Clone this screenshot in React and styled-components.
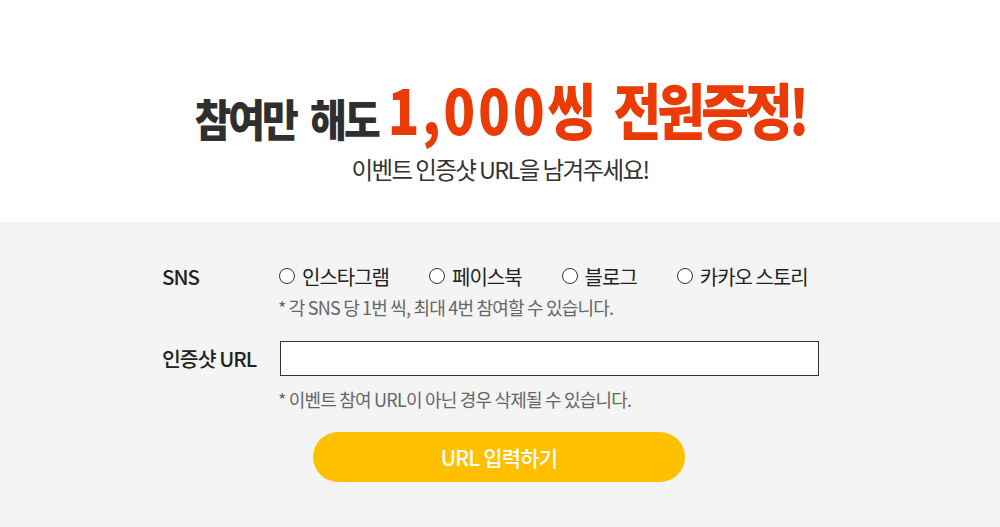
import React from "react";
import styled, { createGlobalStyle } from "styled-components";

const Global = createGlobalStyle`
  html, body { margin: 0; padding: 0; background: #fff; }
  body { font-family: "Noto Sans CJK KR", "Noto Sans", sans-serif; color: #333; }
  * { box-sizing: border-box; }
`;

const Page = styled.div`
  width: 1000px;
  height: 527px;
  display: flex;
  flex-direction: column;
  overflow: hidden;
`;

const Hero = styled.header`
  height: 222px;
  background: #fff;
  display: flex;
  flex-direction: column;
  align-items: center;
  padding-top: 70px;
`;

const Title = styled.h1`
  margin: 0;
  display: flex;
  align-items: flex-end;
  font-weight: 900;
  line-height: 1;
  height: 70px;
`;

const Part = styled.span`
  display: inline-block;
  color: ${(p) => (p.$red ? "#ea3a05" : "#2f2f2f")};
  font-size: ${(p) => p.$size}px;
  letter-spacing: ${(p) => p.$ls}px;
  word-spacing: 8px;
  margin-right: ${(p) => p.$mr || 0}px;
  transform: scaleY(${(p) => p.$sy});
  transform-origin: center bottom;
`;

const Sub = styled.p`
  margin: 15px 0 0;
  font-size: 23.5px;
  letter-spacing: -1.6px;
  color: #333;
  line-height: 1.2;
`;

const FormArea = styled.section`
  flex: 1;
  background: #f4f4f4;
  padding: 42px 0 0 162px;
  display: flex;
  flex-direction: column;
`;

const Row = styled.div`
  display: flex;
  align-items: center;
  height: ${(p) => p.$h}px;
  margin-top: ${(p) => p.$mt || 0}px;
`;

const Label = styled.div`
  width: ${(p) => p.$w || 118}px;
  font-size: 20.5px;
  font-weight: 500;
  letter-spacing: -1px;
  color: #222;
`;

const Options = styled.div`
  display: flex;
  gap: 40px;
`;

const Option = styled.label`
  display: flex;
  align-items: center;
  gap: 7px;
  font-size: 20px;
  letter-spacing: -1px;
  color: #222;
`;

const Radio = styled.span`
  width: 16px;
  height: 16px;
  border-radius: 50%;
  border: 1.5px solid #333;
  background: #fff;
`;

const Note = styled.p`
  margin: ${(p) => p.$mt}px 0 0 116px;
  font-size: 18px;
  letter-spacing: -0.8px;
  color: #666;
  line-height: 1.2;
`;

const Input = styled.input`
  width: 539px;
  height: 35px;
  border: 1px solid #333;
  background: #fff;
  outline: none;
  padding: 0 8px;
`;

const Button = styled.button`
  align-self: flex-start;
  margin: 22px 0 0 151px;
  width: 372px;
  height: 50px;
  border: none;
  border-radius: 25px;
  background: #ffc000;
  color: #fff;
  font-family: inherit;
  font-size: 21px;
  font-weight: 500;
  letter-spacing: -0.8px;
`;

const options = ["인스타그램", "페이스북", "블로그", "카카오 스토리"];

export default function App() {
  return (
    <Page>
      <Global />
      <Hero>
        <Title>
          <Part $size={40} $ls={-3} $sy={1.1} $mr={10}>참여만 해도</Part>
          <Part $red $size={52} $ls={3} $sy={1.18} $mr={15}>1,000씽</Part>
          <Part $red $size={52} $ls={-4} $sy={1.18}>전원증정!</Part>
        </Title>
        <Sub>이벤트 인증샷 URL을 남겨주세요!</Sub>
      </Hero>
      <FormArea>
        <Row $h={24}>
          <Label $w={117}>SNS</Label>
          <Options>
            {options.map((o) => (
              <Option key={o}>
                <Radio />
                {o}
              </Option>
            ))}
          </Options>
        </Row>
        <Note $mt={9}>* 각 SNS 당 1번 씩, 최대 4번 참여할 수 있습니다.</Note>
        <Row $h={35} $mt={22}>
          <Label>인증샷 URL</Label>
          <Input type="text" />
        </Row>
        <Note $mt={13}>* 이벤트 참여 URL이 아닌 경우 삭제될 수 있습니다.</Note>
        <Button>URL 입력하기</Button>
      </FormArea>
    </Page>
  );
}
